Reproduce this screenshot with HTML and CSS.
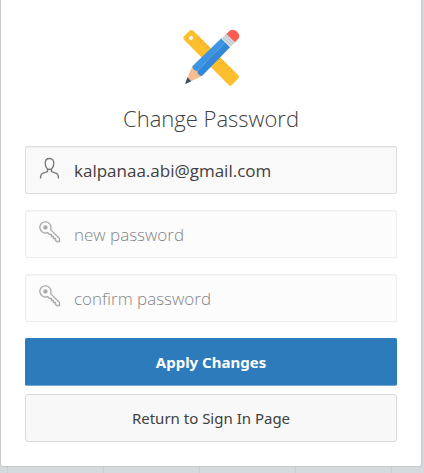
FILE: index.html
```
<!DOCTYPE html>
<html lang="en">
<head>
<meta charset="utf-8">
<meta name="viewport" content="width=device-width, initial-scale=1">
<title>Change Password</title>
<link rel="stylesheet" href="styles.css">
</head>
<body>
<svg class="defs" aria-hidden="true">
  <symbol id="key" viewBox="0 0 22 22">
    <circle cx="6.4" cy="6.4" r="2.2" fill="currentColor" stroke="none"/>
    <path d="M11.6 8.6A5.6 5.6 0 1 0 8.6 11.6L10.5 13.5H12.5V15.5H14.5V17.5H16.5V19.5L17.5 20.5H20.5V17.5Z"/>
  </symbol>
</svg>
<main class="card">
  <svg class="logo" viewBox="39 27 171 171" aria-hidden="true">
    <path fill="#fdbf2d" fill-rule="evenodd" d="M42 49L60 31Q65 28 70 32L205 166Q209 171 205 175L186 195Q181 199 176 195L42 59Q38 54 42 49ZM63 48a6 6 0 1 0 .1 0Z"/>
    <path stroke="#d99c1f" stroke-width="2" fill="none" d="M88 51l-6 6M97 60l-9 9M106 69l-6 6M115 78l-9 9M152 115l-6 6M161 124l-9 9M170 133l-6 6M179 142l-9 9M188 151l-6 6"/>
    <path fill="#f7bd8e" d="M67 139L96 168L60 185L51 176Z"/>
    <path fill="#3f5063" d="M52 172L64 184L45 193Z"/>
    <path fill="#3e94e4" d="M67 139L154 55L166 67L82 154Q68 151 67 139Z"/>
    <path fill="#3287d8" d="M82 154L166 67L180 82L96 168Q83 167 82 154Z"/>
    <path fill="#d3d9dc" d="M154 56L169 41L196 67L180 82Z"/>
    <path stroke="#a9b2b8" stroke-width="2" fill="none" d="M159 52l26 25M165 46l26 25"/>
    <path fill="#fb5d50" d="M169 42L179 32Q189 26 200 34Q211 44 206 55L195 67Z"/>
  </svg>
  <h1 class="title">Change Password</h1>
  <form class="form">
    <div class="field">
      <svg class="icon" viewBox="0 0 22 22" aria-hidden="true"><path d="M10.5 1.5C7.5 1.5 6.2 3.6 6.2 6.2C6.2 9.5 8 12.5 10.5 12.5S14.8 9.5 14.8 6.2C14.8 3.6 13.5 1.5 10.5 1.5ZM8.5 12.2V14.5L3 16.7Q1.5 17.6 1.5 21.5M12.5 12.2V14.5L18 16.7Q19.5 17.6 19.5 21.5"/></svg>
      <input class="input" type="email" aria-label="Email" value="kalpanaa.abi@gmail.com">
    </div>
    <div class="field field-empty">
      <svg class="icon" aria-hidden="true"><use href="#key"/></svg>
      <input class="input" type="password" aria-label="New password" placeholder="new password">
    </div>
    <div class="field field-empty">
      <svg class="icon" aria-hidden="true"><use href="#key"/></svg>
      <input class="input" type="password" aria-label="Confirm password" placeholder="confirm password">
    </div>
    <div class="actions">
      <button class="button button-primary" type="submit">Apply Changes</button>
      <button class="button" type="button">Return to Sign In Page</button>
    </div>
  </form>
</main>
</body>
</html>
```
FILE: styles.css
```
* { box-sizing: border-box; }
html { min-height: 100%; }
body {
  margin: 0;
  font-family: "Open Sans", "Noto Sans", sans-serif;
  color: #404040;
  background: #d7dadd repeating-linear-gradient(90deg, transparent 0 7px, #ccd0d3 7px 8px, transparent 8px 96px);
}
.defs { position: absolute; width: 0; height: 0; }
.card {
  display: flex;
  flex-direction: column;
  align-items: center;
  margin: 0 3px 7px 1px;
  padding: 29px 24px 24px;
  background: #fff;
  border-radius: 0 0 2px 2px;
  box-shadow: 0 0 2px rgba(0, 0, 0, .25);
}
.logo { width: 57px; height: 57px; }
.title {
  margin: 16px 0 12px;
  font-size: 22px;
  line-height: 32px;
  font-weight: 300;
}
.form {
  display: flex;
  flex-direction: column;
  gap: 16px;
  width: 100%;
}
.field {
  display: flex;
  height: 48px;
  padding-left: 13px;
  border: 1px solid #dedede;
  border-radius: 2px;
  background: #f9f9f9;
  box-shadow: inset 0 1px 1px #eee;
}
.field-empty { border-color: #eee; background: #fcfcfc; box-shadow: inset 0 1px 1px #f6f6f6; }
.icon {
  flex: none;
  width: 22px;
  height: 22px;
  margin-top: 10px;
  fill: none;
  stroke: currentColor;
  stroke-width: 1.3;
  color: #777;
}
.field-empty .icon { color: #aaa; }
.input {
  flex: 1;
  min-width: 0;
  padding: 2px 13px 0;
  border: 0;
  outline: 0;
  background: transparent;
  color: #404040;
  font: 400 17px/24px "Open Sans", "Noto Sans", sans-serif;
}
.input::placeholder { color: #858585; font-weight: 300; opacity: 1; }
.actions { display: flex; flex-direction: column; gap: 8px; }
.button {
  height: 48px;
  padding: 0 16px;
  border: 1px solid #d9d9d9;
  border-radius: 3px;
  background: #f8f8f8;
  color: #404040;
  font: 400 15px/24px "Noto Sans", "Open Sans", sans-serif;
}
.button-primary {
  border-color: #2d7bbb;
  border-bottom-color: #79a9d1;
  border-radius: 2px;
  background: #2d7bbb;
  color: #fff;
  font-weight: 700;
}
```
